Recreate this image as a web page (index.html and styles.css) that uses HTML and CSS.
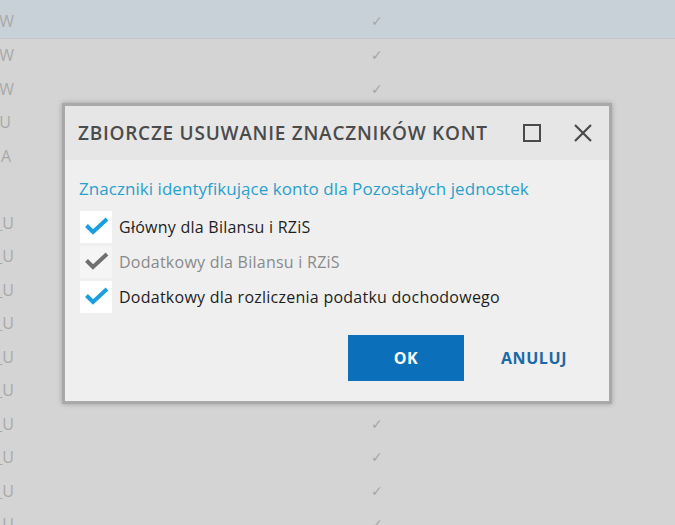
FILE: index.html
```html
<!DOCTYPE html>
<html lang="pl">
<head>
<meta charset="utf-8">
<title>Zbiorcze usuwanie znaczników kont</title>
<link rel="stylesheet" href="styles.css">
</head>
<body>
<div class="grid">
  <div class="row row-first row-selected"><div class="code"><span>KONTO_W</span></div><div class="mark">✓</div></div>
  <div class="row"><div class="code"><span>KONTO_W</span></div><div class="mark">✓</div></div>
  <div class="row"><div class="code"><span>KONTO_W</span></div><div class="mark">✓</div></div>
  <div class="row"><div class="code code-short"><span>KONTO U</span></div><div class="mark"></div></div>
  <div class="row"><div class="code code-short"><span>KONTO A</span></div><div class="mark"></div></div>
  <div class="row"><div class="code"><span></span></div><div class="mark"></div></div>
  <div class="row"><div class="code"><span>KONTO_U</span></div><div class="mark"></div></div>
  <div class="row"><div class="code"><span>KONTO_U</span></div><div class="mark"></div></div>
  <div class="row"><div class="code"><span>KONTO_U</span></div><div class="mark"></div></div>
  <div class="row"><div class="code"><span>KONTO_U</span></div><div class="mark"></div></div>
  <div class="row"><div class="code"><span>KONTO_U</span></div><div class="mark"></div></div>
  <div class="row"><div class="code"><span>KONTO_U</span></div><div class="mark"></div></div>
  <div class="row"><div class="code"><span>KONTO_U</span></div><div class="mark">✓</div></div>
  <div class="row"><div class="code"><span>KONTO_U</span></div><div class="mark">✓</div></div>
  <div class="row"><div class="code"><span>KONTO_U</span></div><div class="mark">✓</div></div>
  <div class="row"><div class="code"><span>KONTO_U</span></div><div class="mark">✓</div></div>
</div>

<div class="dialog">
  <div class="titlebar">
    <div class="title">ZBIORCZE USUWANIE ZNACZNIKÓW KONT</div>
    <div class="tools">
      <svg class="tool" width="20" height="20" viewBox="0 0 20 20"><rect x="2" y="2" width="16" height="16" fill="none" stroke="#4a4a4a" stroke-width="2"/></svg>
      <svg class="tool" width="20" height="20" viewBox="0 0 20 20"><path d="M2 2 L18 18 M18 2 L2 18" fill="none" stroke="#4a4a4a" stroke-width="2.2"/></svg>
    </div>
  </div>
  <div class="content">
    <div class="subtitle">Znaczniki identyfikujące konto dla Pozostałych jednostek</div>
    <div class="options">
      <label class="option">
        <span class="box"><svg width="32" height="32" viewBox="0 0 32 32"><path d="M6.5 14.5 L13 21 L27 8" fill="none" stroke="#1a9ee0" stroke-width="4"/></svg></span>
        <span class="label">Główny dla Bilansu i RZiS</span>
      </label>
      <label class="option disabled">
        <span class="box"><svg width="32" height="32" viewBox="0 0 32 32"><path d="M6.5 14.5 L13 21 L27 8" fill="none" stroke="#707070" stroke-width="4"/></svg></span>
        <span class="label">Dodatkowy dla Bilansu i RZiS</span>
      </label>
      <label class="option">
        <span class="box"><svg width="32" height="32" viewBox="0 0 32 32"><path d="M6.5 14.5 L13 21 L27 8" fill="none" stroke="#1a9ee0" stroke-width="4"/></svg></span>
        <span class="label">Dodatkowy dla rozliczenia podatku dochodowego</span>
      </label>
    </div>
    <div class="actions">
      <button class="btn btn-primary">OK</button>
      <button class="btn btn-link">ANULUJ</button>
    </div>
  </div>
</div>
</body>
</html>
```

FILE: styles.css
```css
html, body {
  margin: 0;
  padding: 0;
}
body {
  width: 675px;
  height: 525px;
  overflow: hidden;
  background: #d4d4d4;
  font-family: "Open Sans", "Noto Sans", sans-serif;
  position: relative;
}
.grid {
  display: flex;
  flex-direction: column;
}
.row {
  height: 33.5px;
  display: flex;
  align-items: center;
  box-sizing: border-box;
}
.row-first {
  height: 38.5px;
  padding-top: 5px;
  border-bottom: 1px solid #c4c8cc;
}
.row-selected {
  background: #c9d1d8;
}
.code {
  width: 14px;
  flex: none;
  display: flex;
  justify-content: flex-end;
  overflow: hidden;
  white-space: pre;
  color: #a9a9a9;
  font-size: 16px;
}
.code-short {
  width: 11px;
  margin-right: 3px;
}
.mark {
  margin-left: 357px;
  width: 20px;
  color: #a6a6a6;
  font-size: 14px;
  font-family: "DejaVu Sans", sans-serif;
}
.dialog {
  position: absolute;
  left: 62px;
  top: 103px;
  width: 544px;
  border: 3px solid #a9a9a9;
  box-shadow: 0 0 5px rgba(0, 0, 0, 0.25);
  background: #efefef;
}
.titlebar {
  height: 54px;
  background: #e6e6e6;
  display: flex;
  align-items: center;
  padding: 0 16px 0 13px;
}
.title {
  flex: 1;
  font-weight: 600;
  font-size: 19px;
  letter-spacing: 0.75px;
  color: #4b4b4b;
}
.tools {
  display: flex;
  gap: 31px;
  align-items: center;
}
.tool {
  display: block;
}
.content {
  padding: 17px 17px 20px 15px;
}
.subtitle {
  color: #2aa0cc;
  font-size: 17px;
  letter-spacing: 0.05px;
  line-height: 23px;
  margin-left: -1px;
}
.options {
  margin-top: 10px;
  display: flex;
  flex-direction: column;
  gap: 2px;
}
.option {
  display: flex;
  align-items: center;
  gap: 7px;
  height: 33px;
}
.box {
  width: 32px;
  height: 32px;
  background: #ffffff;
  display: block;
}
.box svg {
  display: block;
}
.disabled .box {
  background: #f5f5f5;
}
.label {
  font-size: 16px;
  letter-spacing: 0.25px;
  color: #1e1e1e;
}
.disabled .label {
  color: #8a8a8a;
}
.actions {
  margin-top: 22px;
  display: flex;
  justify-content: flex-end;
  gap: 12px;
}
.btn {
  width: 116px;
  height: 46px;
  border: none;
  font-family: "Open Sans", "Noto Sans", sans-serif;
  font-weight: 700;
  font-size: 16px;
  letter-spacing: 0.6px;
  cursor: pointer;
}
.btn-primary {
  background: #0b6fba;
  color: #ffffff;
}
.btn-link {
  background: transparent;
  color: #1a6aa6;
}
```
